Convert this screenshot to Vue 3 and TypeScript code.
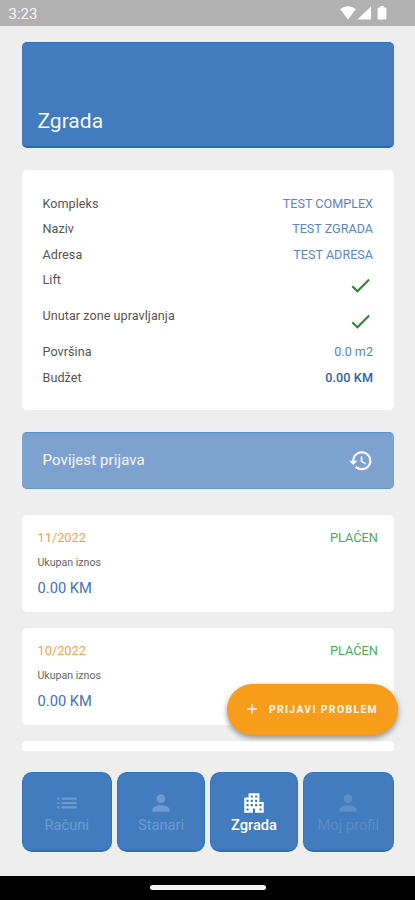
<script setup lang="ts">
interface InfoRow {
  label: string
  value?: string
  checked?: boolean
  strong?: boolean
}

interface Bill {
  period: string
  amount: string
  status: string
}

interface Tab {
  label: string
  icon: string
  active?: boolean
  faint?: boolean
}

const rows: InfoRow[] = [
  { label: 'Kompleks', value: 'TEST COMPLEX' },
  { label: 'Naziv', value: 'TEST ZGRADA' },
  { label: 'Adresa', value: 'TEST ADRESA' },
  { label: 'Lift', checked: true },
  { label: 'Unutar zone upravljanja', checked: true },
  { label: 'Površina', value: '0.0 m2' },
  { label: 'Budžet', value: '0.00 KM', strong: true },
]

const bills: Bill[] = [
  { period: '11/2022', amount: '0.00 KM', status: 'PLAĆEN' },
  { period: '10/2022', amount: '0.00 KM', status: 'PLAĆEN' },
]

const person =
  'M12 12c2.21 0 4-1.79 4-4s-1.79-4-4-4-4 1.79-4 4 1.79 4 4 4zm0 2c-2.67 0-8 1.34-8 4v2h16v-2c0-2.66-5.33-4-8-4z'

const tabs: Tab[] = [
  {
    label: 'Računi',
    icon: 'M3 13h2v-2H3v2zm0 4h2v-2H3v2zm0-8h2V7H3v2zm4 4h14v-2H7v2zm0 4h14v-2H7v2zM7 7v2h14V7H7z',
  },
  { label: 'Stanari', icon: person },
  {
    label: 'Zgrada',
    icon: 'M17 11V3H7v4H3v14h8v-4h2v4h8V11h-4zM7 19H5v-2h2v2zm0-4H5v-2h2v2zm0-4H5V9h2v2zm4 4H9v-2h2v2zm0-4H9V9h2v2zm0-4H9V5h2v2zm4 8h-2v-2h2v2zm0-4h-2V9h2v2zm0-4h-2V5h2v2zm4 12h-2v-2h2v2zm0-4h-2v-2h2v2z',
    active: true,
  },
  { label: 'Moj profil', icon: person, faint: true },
]
</script>

<template>
  <div class="screen">
    <header class="status-bar">
      <span class="time">3:23</span>
      <svg class="status-icons" viewBox="0 0 48 16">
        <path d="M0.2 2.9Q8 -2.6 15.8 2.9L8 13.4Z" />
        <path d="M31 0.6V13.4H17.4Z" />
        <path d="M40.4 0h3.4v1.4h1.4q1.2 0 1.2 1v9.9q0 1.2-1.2 1.2h-6.4q-1.2 0-1.2-1.2V2.4q0-1 1.2-1h1.6z" />
      </svg>
    </header>

    <main class="content">
      <section class="hero"><h1>Zgrada</h1></section>

      <section class="info">
        <div v-for="row in rows" :key="row.label" class="row" :class="{ tall: row.checked }">
          <span class="label">{{ row.label }}</span>
          <svg v-if="row.checked" class="check" viewBox="0 0 24 24">
            <path d="M9 16.17L4.83 12l-1.42 1.41L9 19 21 7l-1.41-1.41z" />
          </svg>
          <span v-else class="value" :class="{ strong: row.strong }">{{ row.value }}</span>
        </div>
      </section>

      <section class="history">
        <span>Povijest prijava</span>
        <svg viewBox="0 0 24 24">
          <path
            d="M13 3c-4.97 0-9 4.03-9 9H1l3.89 3.89.07.14L9 12H6c0-3.87 3.13-7 7-7s7 3.13 7 7-3.13 7-7 7c-1.93 0-3.68-.79-4.94-2.06l-1.42 1.42C8.27 19.99 10.51 21 13 21c4.97 0 9-4.03 9-9s-4.03-9-9-9zm-1 5v5l4.28 2.54.72-1.21-3.5-2.08V8H12z"
          />
        </svg>
      </section>

      <section class="bills">
        <article v-for="bill in bills" :key="bill.period" class="bill">
          <div class="bill-head">
            <span class="period">{{ bill.period }}</span>
            <span class="paid">{{ bill.status }}</span>
          </div>
          <div class="caption">Ukupan iznos</div>
          <div class="amount">{{ bill.amount }}</div>
        </article>
        <div class="bill-peek"></div>
      </section>
    </main>

    <nav class="tabs">
      <button
        v-for="tab in tabs"
        :key="tab.label"
        class="tab"
        :class="{ active: tab.active, faint: tab.faint }"
      >
        <svg viewBox="0 0 24 24"><path :d="tab.icon" /></svg>
        <span>{{ tab.label }}</span>
      </button>
    </nav>

    <footer class="gesture-bar"><div class="handle"></div></footer>

    <button class="fab">
      <svg viewBox="0 0 10 10"><path d="M4.2 0.3h1.6v3.9h3.9v1.6H5.8v3.9H4.2V5.8H.3V4.2h3.9z" /></svg>
      <span>PRIJAVI PROBLEM</span>
    </button>
  </div>
</template>

<style>
body {
  margin: 0;
  background: #eeeeee;
}
</style>

<style scoped>
* {
  box-sizing: border-box;
}

.screen {
  position: relative;
  display: flex;
  flex-direction: column;
  width: 415px;
  height: 900px;
  overflow: hidden;
  background: #eeeeee;
  font-family: Roboto, 'Liberation Sans', sans-serif;
}

.status-bar {
  display: flex;
  flex: none;
  align-items: center;
  justify-content: space-between;
  height: 26px;
  padding: 1px 27.5px 0 8.5px;
  background: #b1b1b1;
  color: #f7f7f7;
}

.time {
  font-size: 15px;
  line-height: 18px;
}

.status-icons {
  width: 48px;
  height: 16px;
  margin-top: 1px;
  fill: #fff;
}

.content {
  display: flex;
  flex: none;
  flex-direction: column;
  height: 725px;
  padding: 16.4px 21px 0 21.5px;
  overflow: hidden;
}

.hero {
  display: flex;
  flex: none;
  align-items: flex-end;
  height: 106px;
  padding: 0 16px 13px;
  border-top: 1px solid #2f72b6;
  border-bottom: 2px solid #1f6db5;
  border-radius: 5px;
  background: #427bbe;
}

.hero h1 {
  margin: 0;
  color: #f5f8fd;
  font-size: 21px;
  font-weight: 400;
  line-height: 24px;
}

.info {
  display: flex;
  flex: none;
  flex-direction: column;
  height: 240.5px;
  margin-top: 21.4px;
  padding: 21.2px 21px 0;
  border-radius: 5px;
  background: #fff;
}

.row {
  display: flex;
  flex: none;
  justify-content: space-between;
  height: 25.4px;
  font-size: 12.6px;
  line-height: 25px;
}

.row.tall {
  height: 36px;
}

.label {
  color: #555;
  letter-spacing: 0.05px;
}

.value {
  color: #5c83c5;
}

.value.strong {
  color: #2b61ad;
  font-weight: 500;
  letter-spacing: 0.1px;
}

.check {
  width: 25px;
  height: 25px;
  margin-top: 5.7px;
  fill: #2b8a2d;
}

.history {
  display: flex;
  flex: none;
  align-items: center;
  justify-content: space-between;
  height: 57px;
  margin-top: 21.7px;
  padding: 0 21px;
  border-top: 1px solid #5b90c8;
  border-bottom: 1px solid #689acb;
  border-radius: 5px;
  background: #7da2cf;
  color: #f6f9fd;
  font-size: 15px;
  letter-spacing: 0.1px;
}

.history svg {
  width: 25.5px;
  height: 25.5px;
  fill: #fff;
}

.bills {
  display: flex;
  flex: none;
  flex-direction: column;
  gap: 16px;
  margin-top: 26px;
}

.bill {
  height: 97px;
  padding: 14px 16px 0;
  border-radius: 5px;
  background: #fff;
}

.bill-peek {
  height: 11px;
  border-radius: 5px 5px 0 0;
  background: #fff;
}

.bill-head {
  display: flex;
  justify-content: space-between;
  font-size: 12.8px;
  line-height: 18px;
}

.period {
  color: #f6a14e;
}

.paid {
  color: #4bad50;
}

.caption {
  margin-top: 9px;
  color: #666;
  font-size: 10.6px;
  line-height: 14px;
}

.amount {
  margin-top: 8px;
  color: #446fba;
  font-size: 14.7px;
  line-height: 20px;
}

.tabs {
  display: grid;
  flex: none;
  grid-template-columns: 90.5px 88px 88px 90.5px;
  gap: 5px;
  height: 124.5px;
  padding: 21px 21px 24px 21.5px;
}

.tab {
  display: flex;
  flex-direction: column;
  align-items: center;
  padding: 17.4px 0 0;
  border: 1px solid #3374b9;
  border-bottom: 2px solid #2a70b6;
  border-radius: 10px;
  background: #427bbe;
  color: #6d9bd0;
  font-family: inherit;
  font-size: 14.7px;
  line-height: 18px;
}

.tab svg {
  width: 26px;
  height: 26px;
  fill: currentColor;
}

.tab.active {
  color: #fff;
  font-weight: 500;
}

.tab.faint {
  color: #5c8ec9;
}

.gesture-bar {
  display: flex;
  flex: 1;
  justify-content: center;
  padding-top: 9.5px;
  background: #000;
}

.handle {
  width: 116px;
  height: 4.5px;
  border-radius: 3px;
  background: #f4f4f4;
}

.fab {
  position: absolute;
  top: 683.5px;
  left: 227.4px;
  display: flex;
  align-items: center;
  width: 171px;
  height: 51px;
  padding: 0 0 0 20px;
  border: 0;
  border-radius: 26px;
  background: #f89c1c;
  box-shadow: 0 3px 5px rgba(0, 0, 0, 0.3), 0 2px 8px rgba(0, 0, 0, 0.12);
  color: #fff8ec;
  font-family: inherit;
  font-size: 10.5px;
  font-weight: 700;
  letter-spacing: 1.3px;
  white-space: nowrap;
}

.fab svg {
  width: 10px;
  height: 10px;
  margin-right: 11.5px;
  fill: currentColor;
}
</style>
